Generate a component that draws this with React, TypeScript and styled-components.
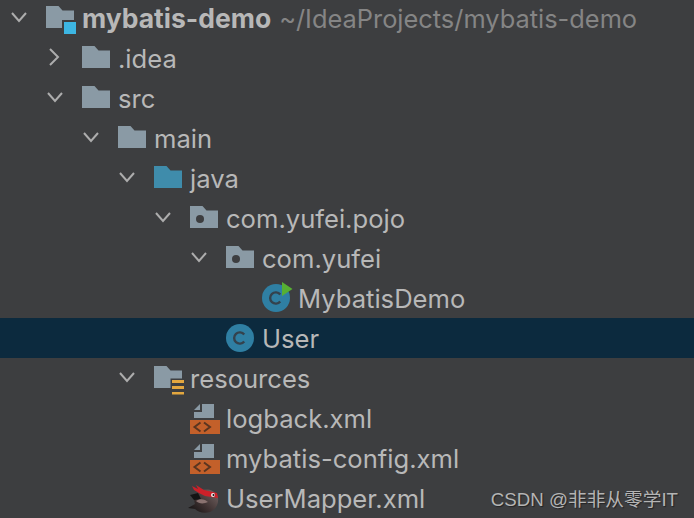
import React from 'react';
import styled, { createGlobalStyle } from 'styled-components';

const GlobalStyle = createGlobalStyle`
  html, body {
    margin: 0;
    padding: 0;
    background: #3d3e40;
    overflow: hidden;
  }
`;

const Tree = styled.div`
  position: relative;
  width: 694px;
  height: 518px;
  overflow: hidden;
  background: #3d3e40;
  font-family: Inter, "Liberation Sans", sans-serif;
  font-size: 25.6px;
  color: #b8b8b8;
`;

const List = styled.ul`
  list-style: none;
  margin: -2px 0 0;
  padding: 0;
`;

const Row = styled.li<{ $depth: number; $selected?: boolean }>`
  display: flex;
  align-items: center;
  height: 40px;
  padding-left: ${props => 10 + props.$depth * 36}px;
  background: ${props => (props.$selected ? '#0c2a3e' : 'transparent')};
`;

const ChevronSlot = styled.span`
  display: flex;
  align-items: center;
  box-sizing: border-box;
  width: 36px;
  height: 40px;
  padding-bottom: 2px;
  flex: none;
`;

const IconSlot = styled.span`
  display: flex;
  align-items: center;
  justify-content: center;
  box-sizing: border-box;
  width: 28px;
  height: 40px;
  padding-bottom: 2px;
  margin-right: 8px;
  flex: none;
`;

const Label = styled.span<{ $bold?: boolean }>`
  font-size: ${props => (props.$bold ? 26.5 : 25.6)}px;
  font-weight: ${props => (props.$bold ? 700 : 400)};
  white-space: nowrap;
`;

const PathHint = styled.span`
  margin-left: 8px;
  font-size: 25.4px;
  color: #858585;
  white-space: nowrap;
`;

const Watermark = styled.div`
  position: absolute;
  right: 16px;
  bottom: 7px;
  font-family: "Liberation Sans", "Noto Sans CJK SC", sans-serif;
  font-size: 18.7px;
  color: #b4b4b4;
  text-shadow: 1px 1px 1px rgba(0, 0, 0, 0.45);
  white-space: nowrap;
`;

const IconSvg = styled.svg`
  display: block;
  overflow: visible;
  flex: none;
`;

const Chevron = ({ open }: { open: boolean }) => (
  <IconSvg width="18" height="18" viewBox="0 0 18 18" fill="none" stroke="#adadad" strokeWidth="2">
    {open ? <path d="M2 5l7 8 7-8" /> : <path d="M4 1l8 8-8 8" />}
  </IconSvg>
);

const FOLDER = 'M0 0H12.5L16.5 4.5H28V22H0Z';
const BASE = '#8a9aa5';
const BG = '#3d3e40';

const Folder = ({ color = BASE }: { color?: string }) => (
  <IconSvg width="28" height="22" viewBox="0 0 28 22">
    <path d={FOLDER} fill={color} />
  </IconSvg>
);

const ModuleFolder = () => (
  <IconSvg width="28" height="22" viewBox="0 0 28 22">
    <path d={FOLDER} fill={BASE} />
    <rect x="16" y="14" width="14" height="14" fill={BG} />
    <rect x="18" y="16" width="12" height="12" fill="#3db6e3" />
  </IconSvg>
);

const PackageFolder = () => (
  <IconSvg width="28" height="22" viewBox="0 0 28 22">
    <path d={FOLDER} fill={BASE} />
    <circle cx="10" cy="13" r="4" fill={BG} />
  </IconSvg>
);

const ResourceFolder = () => (
  <IconSvg width="28" height="22" viewBox="0 0 28 22">
    <path d={FOLDER} fill={BASE} />
    <rect x="16.5" y="12.5" width="13" height="16" fill={BG} />
    <g fill="#e3a73f">
      <rect x="18" y="14" width="12" height="3" />
      <rect x="18" y="20" width="12" height="3" />
      <rect x="18" y="26" width="12" height="2.5" />
    </g>
  </IconSvg>
);

const ClassIcon = ({ run }: { run?: boolean }) => (
  <IconSvg width="28" height="28" viewBox="0 0 28 28">
    <circle cx="14" cy="15" r="14" fill="#2f7fa3" />
    <path d="M18.2 11.6a5.6 5.6 0 1 0 0 6.8" fill="none" stroke="#34424d" strokeWidth="2.4" />
    {run && <path d="M20 -1l10.500 7-10.500 7z" fill="#57b033" />}
  </IconSvg>
);

const XmlIcon = () => (
  <IconSvg width="30" height="30" viewBox="-1 -2 30 30">
    <path d="M4 6L10 0V6Z" fill={BASE} />
    <path d="M12 0H24V14H4V8H12Z" fill={BASE} />
    <rect x="0" y="16" width="30" height="14" fill="#c3602a" />
    <g fill="none" stroke="#5a3520" strokeWidth="2">
      <path d="M10.500 18.500L4.500 23L10.500 27.500" />
      <path d="M14 18.500L20 23L14 27.500" />
    </g>
  </IconSvg>
);

const MybatisIcon = () => (
  <IconSvg width="32" height="30" viewBox="0 -2 32 30">
    <defs>
      <linearGradient id="bird" x1="0" y1="1" x2="1" y2="0.2">
        <stop offset="0" stopColor="#0d0d0d" />
        <stop offset="0.5" stopColor="#3f3232" />
        <stop offset="1" stopColor="#6e5f5e" />
      </linearGradient>
    </defs>
    <path d="M0 24L7 20C5 14 7 9 12 7C18 4 26 6 29 11C32 17 29 25 22 28C16 30 10 28 7 25Z" fill="url(#bird)" />
    <path d="M2 11L10 9L13 15L6 16Z" fill="#141414" />
    <path d="M8 17C12 14 17 15 20 18C16 20 11 20 8 17Z" fill="#8a7270" />
    <path d="M4 2L10 5L8 1L16 6L29 9L30 14L17 12L11 9L6 6Z" fill="#cc2029" />
    <circle cx="25" cy="11" r="2" fill="#eee" />
    <circle cx="25.500" cy="11" r="1" fill="#111" />
  </IconSvg>
);

type Item = {
  depth: number;
  name: string;
  icon: React.ReactNode;
  open?: boolean;
  hint?: string;
  bold?: boolean;
  selected?: boolean;
};

const items: Item[] = [
  { depth: 0, name: 'mybatis-demo', icon: <ModuleFolder />, open: true, bold: true, hint: '~/IdeaProjects/mybatis-demo' },
  { depth: 1, name: '.idea', icon: <Folder />, open: false },
  { depth: 1, name: 'src', icon: <Folder />, open: true },
  { depth: 2, name: 'main', icon: <Folder />, open: true },
  { depth: 3, name: 'java', icon: <Folder color="#3f8cab" />, open: true },
  { depth: 4, name: 'com.yufei.pojo', icon: <PackageFolder />, open: true },
  { depth: 5, name: 'com.yufei', icon: <PackageFolder />, open: true },
  { depth: 6, name: 'MybatisDemo', icon: <ClassIcon run /> },
  { depth: 5, name: 'User', icon: <ClassIcon />, selected: true },
  { depth: 3, name: 'resources', icon: <ResourceFolder />, open: true },
  { depth: 4, name: 'logback.xml', icon: <XmlIcon /> },
  { depth: 4, name: 'mybatis-config.xml', icon: <XmlIcon /> },
  { depth: 4, name: 'UserMapper.xml', icon: <MybatisIcon /> },
];

const App = () => (
  <Tree>
    <GlobalStyle />
    <List>
      {items.map(item => (
        <Row key={item.name} $depth={item.depth} $selected={item.selected}>
          <ChevronSlot>{item.open !== undefined && <Chevron open={item.open} />}</ChevronSlot>
          <IconSlot>{item.icon}</IconSlot>
          <Label $bold={item.bold}>{item.name}</Label>
          {item.hint && <PathHint>{item.hint}</PathHint>}
        </Row>
      ))}
    </List>
    <Watermark>CSDN @非非从零学IT</Watermark>
  </Tree>
);

export default App;
